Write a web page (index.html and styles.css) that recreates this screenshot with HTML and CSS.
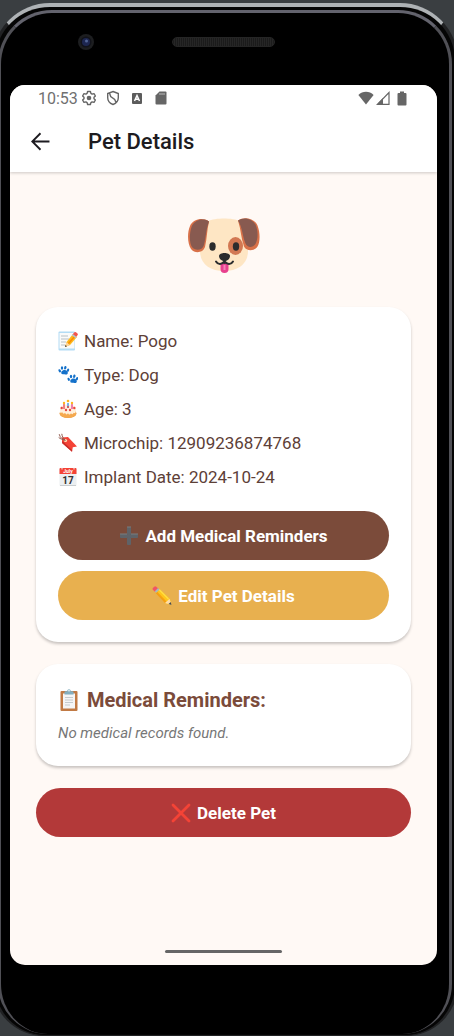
FILE: index.html
```html
<!DOCTYPE html>
<html lang="en">
<head>
<meta charset="utf-8">
<meta name="viewport" content="width=device-width, initial-scale=1">
<title>Pet Details</title>
<link rel="stylesheet" href="styles.css">
</head>
<body>
<div class="phone">
<div class="rim">
  <div class="bezel">
    <svg class="camera" viewBox="0 0 18 18" aria-hidden="true"><circle cx="9" cy="9" r="8" fill="#1d1e20"/><circle cx="9" cy="9" r="5.500" fill="#111219"/><circle cx="9" cy="9" r="4" fill="#1d2650"/><circle cx="9.500" cy="8" r="1.500" fill="#526596"/></svg>
    <div class="speaker"></div>
  </div>
  <div class="screen">
    <header class="top">
      <div class="status">
        <span class="clock">10:53</span>
        <svg class="status-icon" viewBox="0 0 16 16" aria-hidden="true"><path d="M6.600 1.500h2.800l.5 1.900 1.200.7 1.900-.5 1.400 2.400-1.400 1.300v1.400l1.400 1.300-1.400 2.400-1.900-.5-1.200.7-.5 1.900H6.600l-.5-1.900-1.200-.7-1.900.5L1.600 10 3 8.700V7.300L1.600 6 3 3.600l1.900.5 1.200-.7z" fill="none" stroke="#666" stroke-width="1.400" stroke-linejoin="round"/><circle cx="8" cy="8" r="2.300" fill="#666"/></svg>
        <svg class="status-icon" viewBox="0 0 16 16" aria-hidden="true"><path d="M8 1.500 13.300 3.500v4.300c0 3.200-2.200 5.600-5.300 6.700-3.100-1.100-5.300-3.500-5.300-6.700V3.500zM4.500 3l1.200 3.500 4 3 1.300 3" fill="none" stroke="#666" stroke-width="1.400"/></svg>
        <svg class="status-icon" viewBox="0 0 16 16" aria-hidden="true"><rect x="3" y="3" width="10" height="11" rx="1" fill="#5c5c5c"/><path d="M5.500 11 8 5.500 10.500 11M6.500 9.300h3" fill="none" stroke="#fff" stroke-width="1.500"/></svg>
        <svg class="status-icon" viewBox="0 0 16 16" aria-hidden="true"><path d="M6.500 1.500h6a1 1 0 0 1 1 1v11a1 1 0 0 1-1 1h-9a1 1 0 0 1-1-1V5.500z" fill="#666"/><path d="M7 3v2M9 3v2M11 3v2" stroke="#bbb"/></svg>
        <span class="spacer"></span>
        <svg class="wifi" viewBox="0 0 16 14" aria-hidden="true"><path d="M8 13.500.4 4C4.500-.2 11.500-.2 15.600 4z" fill="#666"/></svg>
        <svg class="signal" viewBox="0 0 14 14" aria-hidden="true"><path d="M1.500 13.300H13V1.500z" fill="none" stroke="#666" stroke-width="1.200"/><path d="M.5 13.700 7 7v6.700z" fill="#666"/></svg>
        <svg class="battery" viewBox="0 0 10 15" aria-hidden="true"><path d="M3 .5h4V2h1.500q1 0 1 1v10.500q0 1-1 1h-7q-1 0-1-1V3q0-1 1-1H3z" fill="#666"/></svg>
      </div>
      <div class="appbar">
        <button class="back" type="button" aria-label="Back"><svg viewBox="0 0 18 18"><path d="M17.500 9H1.500M9 1.200 1.200 9 9 16.800" fill="none" stroke="#1d1b20" stroke-width="1.800"/></svg></button>
        <h1 class="title">Pet Details</h1>
      </div>
    </header>
    <main class="content">
      <svg class="dog" viewBox="0 0 72 56" role="img" aria-label="Dog">
        <path d="M20 3C27-.5 45-.5 52 3c4 8 8 20 8 30 0 13-10 20-24 20S12 46 12 33C12 23 15 11 20 3z" fill="#fee6c4"/>
        <path d="M21 3.500C15-1 5 1 2 8-1 15-.5 26 3 31c4 5 12 4 14-2 2-9 2-17 4-25.500z" fill="#d87149"/>
        <path d="M21 3.500C15-.5 6 2 3.500 9 1 17 1.500 25 4 29c3 4 10 4 12-2 2-8 2-16 5-23.500z" fill="#885a50"/>
        <path d="M50 2.500c6-4.500 17-2 19.500 5 3 8 2.500 17 0 21-3 5-11 5-13.500 0-3-8-3-17-6-26z" fill="#d87149"/>
        <path d="M50 2.500c6-4 14-2 17.500 4 3 7 2.500 15 0 19.500-3 4-8 4-10-.5-3-7-3-16-7.500-23z" fill="#885a50"/>
        <ellipse cx="47.500" cy="28" rx="7.500" ry="9" fill="#d27852"/>
        <ellipse cx="24.500" cy="28.500" rx="3.200" ry="4.200" fill="#2b2c2d"/><ellipse cx="48" cy="28.500" rx="3.200" ry="4.200" fill="#2b2c2d"/>
        <path d="M32.500 45h8v6a4 4 0 0 1-8 0z" fill="#e8408e"/><path d="M36.500 47v5" stroke="#f482b5" stroke-width="2"/>
        <path d="M31 38c0-4 11-4 11 0 0 3-3 5-5.500 5S31 41 31 38z" fill="#2b2c2d"/>
        <path d="M28 43.500c2 3.500 6 3 8.500 0 2.500 3 6.500 3.500 8.500 0M36.500 41v4" fill="none" stroke="#2b2c2d" stroke-width="2" stroke-linecap="round"/>
      </svg>
      <section class="card" aria-label="Pet information">
        <ul class="facts">
          <li class="fact"><svg class="emoji" viewBox="0 0 20 20" aria-hidden="true"><rect x=".5" y=".5" width="16.500" height="19" rx="1" fill="#b3dcf5"/><rect x="1.500" y="2" width="15" height="15.500" fill="#fafafa"/><path d="M3 5h7M3 8h8M3 11h5M3 14h4" stroke="#b8c0c5"/><path d="m7 16 1.500-5L15 3l4 3-7 8z" fill="#fcb91d"/><path d="m10 13 7-8" stroke="#fb8c00" stroke-width="1.500"/><path d="m14.500 3.500 1.700-2Q17 .5 18 1.200l1.500 1.300q.8.800 0 1.700L18 6z" fill="#f2554d"/><path d="m14.300 3.700 3.800 3" stroke="#b5c6cc" stroke-width="1.500"/><path d="m7 16 1.500-5 3.400 3z" fill="#ffd49a"/><path d="m7 16 .5-2 1.500 1.200z" fill="#333"/></svg>Name: Pogo</li>
          <li class="fact"><svg class="emoji" viewBox="0 0 20 20" aria-hidden="true"><g fill="#1471ca"><g id="paw"><path d="M3.500 8.500C2.500 6.500 5 4.700 7 5c2 .2 3.700 2.500 2.400 4-.9 1-2 .2-3 .2s-2.400.4-2.900-.7z"/><ellipse cx="1.700" cy="5.800" rx="1.100" ry="1.700" transform="rotate(-25 1.700 5.800)"/><ellipse cx="4" cy="3" rx="1.200" ry="1.800"/><ellipse cx="7.300" cy="2.800" rx="1.200" ry="1.800" transform="rotate(15 7.300 2.800)"/><ellipse cx="10" cy="5.200" rx="1.100" ry="1.700" transform="rotate(25 10 5.200)"/></g><use href="#paw" x="9" y="8.500"/></g></svg>Type: Dog</li>
          <li class="fact"><svg class="emoji" viewBox="0 0 20 20" aria-hidden="true"><ellipse cx="10" cy="14.500" rx="8.500" ry="4.500" fill="#e99c45"/><path d="M2 9v6c1 5 15 5 16 0V9z" fill="#f5a94e"/><ellipse cx="10" cy="9.500" rx="8" ry="4" fill="#fff0dc"/><path d="M2 10v3q1 2 2 0 1.500 3 3 .8 1.500 3 3 .5 1.500 2.500 3 0 1.500 2 2.700-.5Q17.500 15 18 12v-2z" fill="#fff0dc"/><path d="M6 10V5" stroke="#e85b6a" stroke-width="1.500"/><path d="M10 9V4" stroke="#4a9ee8" stroke-width="1.500"/><path d="M14 10V5" stroke="#e85b9a" stroke-width="1.500"/><g fill="#ffb51b"><circle cx="6" cy="4" r="1.200"/><circle cx="10" cy="2" r="1.300"/><circle cx="14" cy="4" r="1.200"/></g><g fill="#e74a40"><circle cx="3.700" cy="9" r="1.200"/><circle cx="8" cy="11" r="1.200"/><circle cx="12" cy="11" r="1.200"/><circle cx="16.300" cy="9" r="1.200"/><circle cx="10" cy="8" r="1"/></g></svg>Age: 3</li>
          <li class="fact"><svg class="emoji" viewBox="0 0 20 20" aria-hidden="true"><path d="m4 4.500 6-.5 9 9.500-4.200.8-.8 4.500L4 10z" fill="#f44336"/><path d="m4 10 10 8.800.2-1.500L4.500 8z" fill="#c72d28"/><circle cx="7.500" cy="7.500" r="1.600" fill="#ffe0b8"/><path d="M7.500 7.500C5 7 2 4.500 1.200 1.200M7 7C5 5 4 3 3.800.8M6.500 7C4.500 6.500 2.500 6 .7 4.500" fill="none" stroke="#925c50"/></svg>Microchip: 12909236874768</li>
          <li class="fact"><svg class="emoji" viewBox="0 0 20 20" aria-hidden="true"><rect x="1.500" y="1" width="17" height="18" rx="1" fill="#eceff1"/><path d="M1.500 7V2q0-1 1-1h15q1 0 1 1v5z" fill="#f44336"/><path d="M2 18.500h16" stroke="#c8cdcf"/><path d="M4 .5v2M16 .5v2" stroke="#eee"/><text class="cal-month" x="10" y="5.700">July</text><text class="cal-day" x="10" y="16.500">17</text></svg>Implant Date: 2024-10-24</li>
        </ul>
        <div class="actions">
          <button class="btn btn-add" type="button"><svg class="emoji" viewBox="0 0 20 20" aria-hidden="true"><path d="M8.500 1.500h3v7h7v3h-7v7h-3v-7h-7v-3h7z" fill="#5f6368" stroke="#5f6368" stroke-linejoin="round"/><path d="M8 1h4M1 8h7M12 8h7" stroke="#797e80"/></svg>Add Medical Reminders</button>
          <button class="btn btn-edit" type="button"><svg class="emoji" viewBox="0 0 20 20" aria-hidden="true"><path d="M3.500 5.500 6.500 2 18 13l1.500 6-6-1.500z" fill="#ffc51b"/><path d="M4.500 6.500 14 16.500" stroke="#f59f13" stroke-width="2"/><path d="m7 3.500 9.500 9.500" stroke="#ffdc45" stroke-width="1.500"/><path d="M3.300 6 .8 3.700q-.7-.8.3-2L2.300.7q1-.7 1.900 0L7 3z" fill="#f25563"/><path d="m3.500 6 3.300-3.300" stroke="#a5b9be" stroke-width="2"/><path d="m13 17 4.500-4.200L19.500 19z" fill="#ffdca6"/><path d="m16.500 18.100 2.200-2 .8 2.900z" fill="#4a4a4a"/></svg>Edit Pet Details</button>
        </div>
      </section>
      <section class="card">
        <h2 class="card-title"><svg class="clipboard" viewBox="0 0 22 22" aria-hidden="true"><rect x="2.500" y="2" width="17" height="20" rx="1" fill="#c17a44"/><rect x="5" y="4.500" width="12" height="15" fill="#f5f5f5"/><path d="M7 8.500h8M7 11h8M7 13.500h8M7 16h5" stroke="#c5cbce"/><path d="M6.500 5.500V3.300q0-1 1-1h1.700C9.200-.4 12.800-.4 12.800 2.300h1.700q1 0 1 1v2.200z" fill="#82aebf"/><circle cx="11" cy="1.800" r=".8" fill="#fff"/></svg>Medical Reminders:</h2>
        <p class="empty">No medical records found.</p>
      </section>
      <button class="btn btn-delete" type="button"><svg class="emoji" viewBox="0 0 20 20" aria-hidden="true"><path d="m2 2 16 16M18 2 2 18" stroke="#f44336" stroke-width="2.800" stroke-linecap="round"/></svg>Delete Pet</button>
    </main>
    <div class="home"></div>
  </div>
</div>
</div>
</body>
</html>
```

FILE: styles.css
```css
* { box-sizing: border-box; }

body {
  margin: 0;
  background: #3a3e41;
  font-family: Roboto, sans-serif;
  overflow-x: hidden;
}

.phone {
  display: flex;
  min-height: calc(100vh - 3px);
  margin: 3px -4px 0 -8px;
  padding: 3px 3px 1px;
  border: 3px solid #202123;
  border-top: 4px solid #aeb2b5;
  border-bottom: 1px solid #202123;
  border-radius: 58px 58px 52px 52px;
  background: #050505;
}

.rim {
  flex: 1;
  display: flex;
  flex-direction: column;
  padding: 0 12px 69px 9px;
  border-style: solid;
  border-width: 3px 3px 0;
  border-color: #63636d #505056 #171718;
  border-radius: 54px 54px 50px 50px;
  background: #000;
}

.bezel {
  display: grid;
  grid-template-columns: 1fr auto 1fr;
  align-items: center;
  height: 72px;
  padding-bottom: 14px;
}

.camera { width: 18px; height: 18px; margin-left: 67px; }

.speaker {
  width: 103px;
  height: 10px;
  border: 1px solid #252525;
  border-radius: 5px;
  background: repeating-linear-gradient(90deg, #1b1b1b 0 1px, #262626 1px 2px);
}

.screen {
  flex: 1;
  display: flex;
  flex-direction: column;
  border-radius: 15px;
  background: #fff9f5;
  overflow: hidden;
}

.top {
  height: 87px;
  background: #fff;
  box-shadow: 0 1px 3px rgba(0, 0, 0, 0.2);
}

.status {
  display: flex;
  align-items: center;
  height: 26px;
  padding: 0 30px 0 28px;
}

.clock { font-size: 16px; color: #707070; margin-right: 3px; }
.status-icon { width: 16px; height: 16px; margin-right: 8px; }
.spacer { flex: 1; }
.wifi { width: 16px; height: 14px; margin-right: 2px; }
.signal { width: 14px; height: 14px; margin-right: 7px; }
.battery { width: 10px; height: 15px; }

.appbar {
  display: flex;
  align-items: center;
  gap: 38px;
  height: 61px;
  padding: 0 21px;
}

.back {
  display: flex;
  padding: 0;
  border: 0;
  background: none;
}

.back svg { width: 19px; height: 19px; }

.title {
  margin: 0;
  font-size: 22px;
  font-weight: 500;
  color: #1d1b20;
}

.content {
  flex: 1;
  display: flex;
  flex-direction: column;
  gap: 22px;
  padding: 46px 26px 22px;
}

.dog {
  align-self: center;
  width: 72px;
  height: 56px;
  margin-bottom: 11px;
}

.card {
  padding: 22px;
  border-radius: 22px;
  background: #fff;
  box-shadow: 0 2px 3px rgba(0, 0, 0, 0.22);
}

.facts {
  display: grid;
  gap: 10px;
  margin: 0;
  padding: 0;
  list-style: none;
}

.fact {
  display: flex;
  align-items: center;
  gap: 6px;
  font-size: 17px;
  line-height: 24px;
  color: #5d4037;
}

.emoji { flex: none; width: 20px; height: 20px; }

.cal-month {
  font-size: 5px;
  font-weight: 700;
  text-anchor: middle;
  fill: #fff;
}

.cal-day {
  font-size: 10px;
  font-weight: 700;
  text-anchor: middle;
  fill: #333;
}

.actions {
  display: grid;
  gap: 11px;
  margin-top: 22px;
}

.btn {
  display: flex;
  align-items: center;
  justify-content: center;
  gap: 6px;
  width: 100%;
  height: 49px;
  padding: 0;
  border: 0;
  border-radius: 25px;
  font-family: inherit;
  font-size: 17px;
  font-weight: 700;
  color: #fff;
}

.btn-add { background: #7b4b3a; }
.btn-edit { background: #e8b04f; }
.btn-delete { background: #b33939; }

.card-title {
  display: flex;
  align-items: center;
  gap: 7px;
  margin: 0 0 8px;
  font-size: 20px;
  line-height: 28px;
  font-weight: 700;
  color: #7b4b3a;
}

.clipboard { width: 22px; height: 22px; }

.empty {
  margin: 0;
  font-size: 15px;
  line-height: 22px;
  font-style: italic;
  color: #777;
}

.home {
  align-self: center;
  width: 117px;
  height: 3px;
  margin-bottom: 12px;
  border-radius: 2px;
  background: #666;
}
```
